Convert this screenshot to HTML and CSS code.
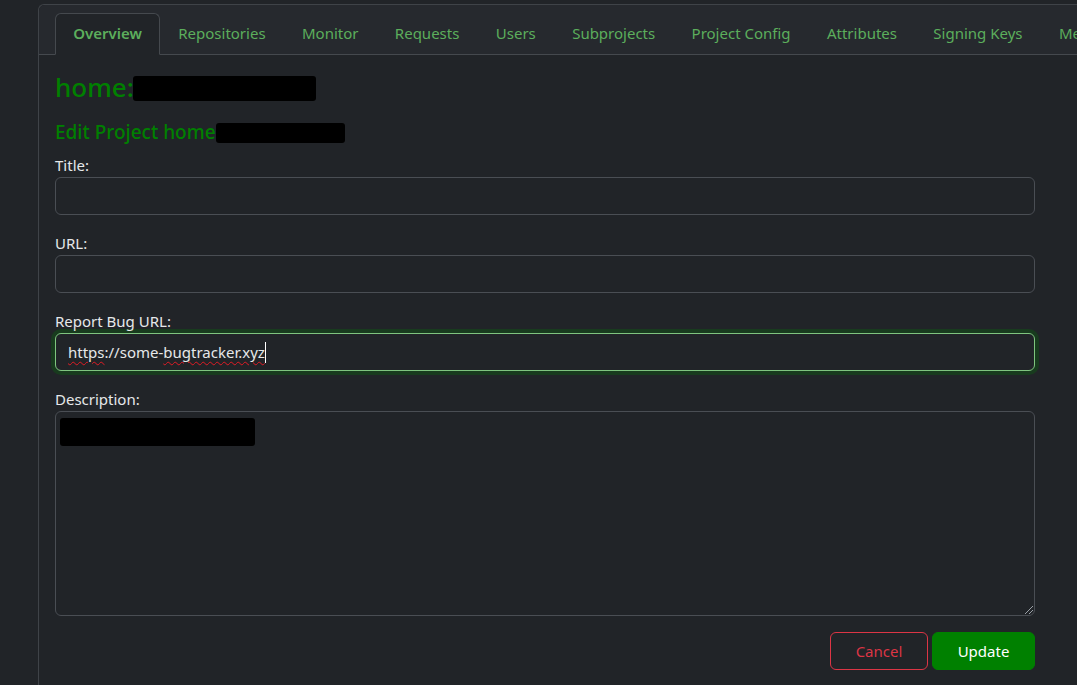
FILE: index.html
```html
<!DOCTYPE html>
<html lang="en">
<head>
<meta charset="utf-8">
<title>Edit Project</title>
<link rel="stylesheet" href="styles.css">
</head>
<body>
<div class="page">
  <div class="card">
    <div class="card-header">
      <ul class="tabs">
        <li class="tab active">Overview</li>
        <li class="tab">Repositories</li>
        <li class="tab">Monitor</li>
        <li class="tab">Requests</li>
        <li class="tab">Users</li>
        <li class="tab">Subprojects</li>
        <li class="tab">Project Config</li>
        <li class="tab">Attributes</li>
        <li class="tab">Signing Keys</li>
        <li class="tab">Meta</li>
      </ul>
    </div>
    <div class="card-body">
      <div class="form">
        <h3 class="title">home:<span class="redact redact-title"></span></h3>
        <h5 class="subtitle">Edit Project home<span class="redact redact-sub"></span></h5>
        <div class="field">
          <label class="label">Title:</label>
          <div class="input"></div>
        </div>
        <div class="field">
          <label class="label">URL:</label>
          <div class="input"></div>
        </div>
        <div class="field">
          <label class="label">Report Bug URL:</label>
          <div class="input focused"><span class="spell">https</span>://some-<span class="spell">bugtracker.xyz</span><span class="caret"></span></div>
        </div>
        <div class="field">
          <label class="label">Description:</label>
          <div class="textarea"><span class="redact redact-desc"></span><span class="grip"></span></div>
        </div>
        <div class="actions">
          <button class="btn btn-cancel">Cancel</button>
          <button class="btn btn-update">Update</button>
        </div>
      </div>
    </div>
  </div>
</div>
</body>
</html>
```

FILE: styles.css
```css
* { box-sizing: border-box; }
html, body {
  margin: 0;
  height: 100%;
  background: #212428;
  overflow: hidden;
}
body {
  font-family: "Noto Sans", "Open Sans", sans-serif;
  font-size: 16px;
  line-height: 1.5;
  color: #dee2e6;
}
.page {
  padding: 4px 0 0 38px;
}
.card {
  width: 1200px;
  min-height: 720px;
  border: 1px solid #3f4348;
  border-right: none;
  border-radius: 6px 0 0 0;
  background: #212428;
}
.card-header {
  background: #26292e;
  border-bottom: 1px solid #45494e;
  padding: 8px 16px 0 16px;
  border-radius: 6px 0 0 0;
}
.tabs {
  list-style: none;
  margin: 0 0 -1px 0;
  padding: 0;
  display: flex;
  flex-wrap: nowrap;
}
.tab {
  padding: 7px 17.2px 9px;
  border: 1px solid transparent;
  border-radius: 6px 6px 0 0;
  color: #5cae5c;
  white-space: nowrap;
  font-size: 15px;
  line-height: 24px;
}
.tab.active {
  background: #212428;
  border-color: #45494e #45494e #212428;
  font-weight: 600;
}
.card-body {
  padding: 16px 16px;
}
.form {
  width: 980px;
}
.title {
  margin: 0 0 17px;
  font-size: 26px;
  font-weight: 500;
  line-height: 33px;
  color: #008000;
  display: flex;
  align-items: center;
}
.subtitle {
  margin: 0 0 9px;
  font-size: 19px;
  font-weight: 500;
  line-height: 23px;
  color: #008000;
  display: flex;
  align-items: center;
}
.redact {
  display: inline-block;
  background: #000;
  border-radius: 3px;
}
.redact-title {
  width: 183px;
  height: 25px;
  margin-top: 2px;
  margin-left: -1px;
}
.redact-sub {
  width: 129px;
  height: 20px;
  margin-top: 1px;
}
.field {
  margin-bottom: 16px;
}
.label {
  display: block;
  font-size: 15px;
  line-height: 24px;
  color: #e6e8ea;
}
.input {
  height: 38px;
  border: 1px solid #4a4e54;
  border-radius: 6px;
  background: #212428;
  padding: 6px 12px;
  font-size: 15px;
  line-height: 24px;
  color: #e6e8ea;
  white-space: nowrap;
}
.input.focused {
  border-color: #7fc47f;
  box-shadow: 0 0 0 4px rgba(0, 128, 0, 0.25);
}
.spell {
  text-decoration: underline wavy #e01b24;
  text-decoration-thickness: 1px;
  text-underline-offset: 3px;
}
.caret {
  display: inline-block;
  width: 1px;
  height: 21px;
  background: #ffffff;
  vertical-align: -5px;
}
.textarea {
  position: relative;
  height: 205px;
  border: 1px solid #4a4e54;
  border-radius: 6px;
  background: #212428;
  padding: 6px 4px;
}
.redact-desc {
  display: block;
  width: 195px;
  height: 28px;
}
.grip {
  position: absolute;
  right: 1px;
  bottom: 1px;
  width: 8px;
  height: 8px;
  background: linear-gradient(135deg, transparent 45%, #9aa0a6 45%, #9aa0a6 52%, transparent 52%, transparent 70%, #9aa0a6 70%, #9aa0a6 77%, transparent 77%);
}
.actions {
  display: flex;
  justify-content: flex-end;
  gap: 4px;
  margin-top: 1px;
}
.btn {
  font-family: inherit;
  font-size: 15px;
  line-height: 24px;
  height: 38px;
  border-radius: 6px;
  cursor: pointer;
}
.btn-cancel {
  width: 98px;
  background: transparent;
  border: 1px solid #dc3545;
  color: #dc3545;
}
.btn-update {
  width: 103px;
  background: #008000;
  border: 1px solid #008000;
  color: #ffffff;
}
```
